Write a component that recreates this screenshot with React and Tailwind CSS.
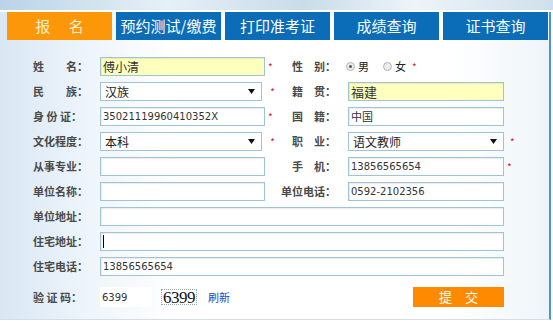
import React from "react";

const cjk = "font-['Noto_Sans_CJK_SC',sans-serif]";
const num = "font-['DejaVu_Sans','Noto_Sans_CJK_SC',sans-serif]";

function Star({ className = "" }) {
  return <span className={"text-[10px] leading-none text-[#e0141e] " + className}>*</span>;
}

function Box({ w, yellow, children, font = cjk, size = "text-[12px]", h = "h-[19px]" }) {
  return (
    <div
      className={`${w} ${h} flex items-center border border-[#9fc4d8] px-[2px] ${size} ${font} text-[#333] shadow-[inset_1px_1px_1px_rgba(0,0,0,0.08)] ${
        yellow ? "bg-[#ffffbe]" : "bg-white"
      }`}
    >
      {children}
    </div>
  );
}

function Select({ w, value }) {
  return (
    <div className={`${w} h-[19px] flex items-center justify-between border border-[#9fc4d8] bg-white pl-[4px] pr-[6px] text-[12px] ${cjk} text-[#222]`}>
      <span>{value}</span>
      <svg width="7" height="5" viewBox="0 0 7 5">
        <path d="M0 0h7L3.5 5z" fill="#111" />
      </svg>
    </div>
  );
}

function LeftLabel({ children }) {
  return (
    <div className={`w-[93px] shrink-0 pl-[26px] whitespace-pre text-[11px] font-bold text-[#4a4a4a] ${cjk}`}>
      {children}
    </div>
  );
}

function RightLabel({ children }) {
  return (
    <div className={`w-[61px] shrink-0 text-right whitespace-pre text-[11px] font-bold text-[#4a4a4a] ${cjk}`}>
      {children}
    </div>
  );
}

function Radio({ checked }) {
  return (
    <span className="flex h-[9px] w-[9px] items-center justify-center rounded-full border border-[#b4b4b4] bg-[#ececec]">
      {checked && <span className="h-[3px] w-[3px] rounded-full bg-[#555]" />}
    </span>
  );
}

const tabs = ["预约测试/缴费", "打印准考证", "成绩查询", "证书查询"];

export default function App() {
  return (
    <div className={`relative h-[323px] w-[553px] overflow-hidden bg-white ${cjk}`}>
      {/* top strip */}
      <div className="h-[10px] bg-[linear-gradient(90deg,#b9d4e6_0%,#e6f0f7_30%,#c8dcea_55%,#eef4f9_75%,#cfe0ec_100%)]" />

      <div className="mt-[2px] h-[308px] w-[551px] border-r-2 border-b border-r-[#4a95d2] border-b-[#d6dde4] bg-[linear-gradient(90deg,#d9e7f3_0%,#eef5fb_16%,#ffffff_32%,#ffffff_82%,#eef5fa_100%)]">
        {/* tabs */}
        <div className="flex gap-[4px] pl-[7px]">
          <div className="flex h-[28px] w-[105px] items-center justify-center bg-[#fb9708] text-[15px] text-[#fff0d2]">
            <span className="whitespace-pre">报　 名</span>
          </div>
          {tabs.map((t) => (
            <div key={t} className="flex h-[28px] w-[105px] items-center justify-center bg-[#0b6db7] text-[15px] text-white">
              {t}
            </div>
          ))}
        </div>

        {/* form */}
        <div className="flex flex-col gap-[6px] pl-[7px] pt-[17px]">
          <div className="flex h-[19px] items-center">
            <LeftLabel>姓　　名：</LeftLabel>
            <div className="flex w-[175px] items-center">
              <Box w="w-[165px]" yellow>傅小清</Box>
              <Star className="ml-[3px]" />
            </div>
            <RightLabel>性　别：</RightLabel>
            <div className={`ml-[10px] flex items-center text-[11px] ${cjk} text-[#222]`}>
              <Radio checked />
              <span className="ml-[3px]">男</span>
              <span className="ml-[14px]"><Radio /></span>
              <span className="ml-[3px]">女</span>
              <Star className="ml-[6px]" />
            </div>
          </div>

          <div className="flex h-[19px] items-center">
            <LeftLabel>民　　族：</LeftLabel>
            <div className="flex w-[175px] items-center">
              <Select w="w-[164px]" value="汉族" />
              <Star className="ml-[8px]" />
            </div>
            <RightLabel>籍　贯：</RightLabel>
            <div className="ml-[12px]">
              <Box w="w-[156px]" yellow size="text-[13px]">福建</Box>
            </div>
          </div>

          <div className="flex h-[19px] items-center">
            <LeftLabel>身 份 证：</LeftLabel>
            <div className="flex w-[175px] items-center">
              <Box w="w-[165px]" font={num} size="text-[10px]">35021119960410352X</Box>
              <Star className="ml-[3px]" />
            </div>
            <RightLabel>国　籍：</RightLabel>
            <div className="ml-[12px]">
              <Box w="w-[156px]" size="text-[11px]">中国</Box>
            </div>
          </div>

          <div className="flex h-[19px] items-center">
            <LeftLabel>文化程度：</LeftLabel>
            <div className="flex w-[175px] items-center">
              <Select w="w-[164px]" value="本科" />
              <Star className="ml-[8px]" />
            </div>
            <RightLabel>职　业：</RightLabel>
            <div className="ml-[12px] flex items-center">
              <Select w="w-[156px]" value="语文教师" />
              <Star className="ml-[6px]" />
            </div>
          </div>

          <div className="flex h-[19px] items-center">
            <LeftLabel>从事专业：</LeftLabel>
            <div className="flex w-[175px] items-center">
              <Box w="w-[165px]" />
            </div>
            <RightLabel>手　机：</RightLabel>
            <div className="ml-[12px] flex items-center">
              <Box w="w-[156px]" font={num} size="text-[10px]">13856565654</Box>
              <Star className="ml-[3px]" />
            </div>
          </div>

          <div className="flex h-[19px] items-center">
            <LeftLabel>单位名称：</LeftLabel>
            <div className="flex w-[175px] items-center">
              <Box w="w-[165px]" />
            </div>
            <RightLabel>单位电话：</RightLabel>
            <div className="ml-[12px]">
              <Box w="w-[156px]" font={num} size="text-[10px]">0592-2102356</Box>
            </div>
          </div>

          <div className="flex h-[19px] items-center">
            <LeftLabel>单位地址：</LeftLabel>
            <Box w="w-[404px]" />
          </div>

          <div className="flex h-[19px] items-center">
            <LeftLabel>住宅地址：</LeftLabel>
            <Box w="w-[404px]">
              <span className="h-[13px] w-[1px] bg-black" />
            </Box>
          </div>

          <div className="flex h-[19px] items-center">
            <LeftLabel>住宅电话：</LeftLabel>
            <Box w="w-[404px]" font={num} size="text-[10px]">13856565654</Box>
          </div>

          <div className="mt-[5px] flex h-[20px] items-center">
            <LeftLabel>验 证 码：</LeftLabel>
            <div className={`flex h-[20px] w-[51px] items-center bg-white px-[2px] text-[10px] ${num} text-[#333]`}>
              6399
            </div>
            <div className="ml-[10px] flex h-[16px] w-[36px] items-center justify-center border border-dotted border-[#9aa] bg-white font-['Liberation_Serif',serif] text-[17px] leading-none tracking-[-0.5px] text-[#111]">
              6399
            </div>
            <span className="ml-[11px] text-[11px] text-[#1d49c4]">刷新</span>
            <div className="ml-[183px] flex h-[20px] w-[91px] items-center justify-center bg-[#ff8a00] text-[13px] text-white">
              <span className="whitespace-pre">提　交</span>
            </div>
          </div>
        </div>
      </div>
    </div>
  );
}
